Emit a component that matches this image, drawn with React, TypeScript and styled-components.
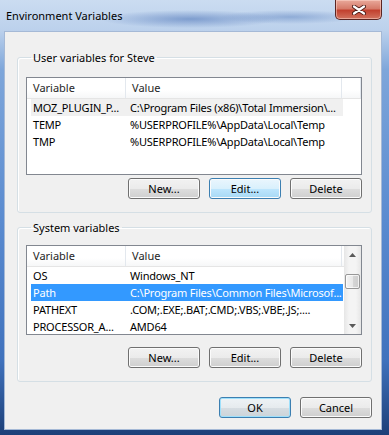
import React from "react";
import styled, { createGlobalStyle, css } from "styled-components";

const GlobalStyle = createGlobalStyle`
  html, body {
    margin: 0;
    padding: 0;
    background: #ffffff;
  }
  body {
    font-family: "Noto Sans", "Open Sans", sans-serif;
    font-size: 11px;
    color: #000000;
  }
`;

const Window = styled.div`
  width: 389px;
  height: 435px;
  box-sizing: border-box;
  display: flex;
  flex-direction: column;
  padding: 0 7px 5px 4px;
  background:
    radial-gradient(ellipse 90px 9px at 190px 19px, rgba(70, 110, 180, 0.55), transparent),
    radial-gradient(ellipse 70px 7px at 290px 17px, rgba(80, 120, 185, 0.45), transparent),
    linear-gradient(180deg, #cbdcf1 0px, #bcd1ec 30px, #7ea6da 70px, #5a8bd0 220px, #4072bd 360px, #1c3f78 435px);
`;

const TitleBar = styled.div`
  height: 31px;
  display: flex;
  justify-content: space-between;
  align-items: flex-start;
`;

const Title = styled.div`
  align-self: center;
  padding-left: 2px;
  font-size: 11px;
  line-height: 16px;
  color: #000000;
`;

const CloseButton = styled.div`
  width: 47px;
  height: 20px;
  box-sizing: border-box;
  display: flex;
  align-items: center;
  justify-content: center;
  border: 1px solid #5b2522;
  border-top: none;
  border-radius: 0 0 5px 5px;
  background: linear-gradient(180deg, #e9a99b 0%, #d67b6a 45%, #c2412f 55%, #d2735f 100%);
  box-shadow: inset 0 0 0 1px rgba(255, 220, 210, 0.5);
`;

const Client = styled.div`
  flex: 1;
  display: flex;
  flex-direction: column;
  background: #f0f0f0;
  border: 1px solid #a5b9d6;
  padding: 18px 9px 0 12px;
`;

const Group = styled.fieldset<{ $top: number }>`
  margin: ${(p) => p.$top}px 0 0 0;
  padding: 0 9px 13px 8px;
  border: 1px solid #d5dfe5;
  border-radius: 3px;
  box-shadow: inset 1px 1px 0 #ffffff;
  min-width: 0;
`;

const Legend = styled.legend`
  margin-left: 5px;
  padding: 0 2px;
  font-size: 11px;
  line-height: 15px;
`;

const ListView = styled.div<{ $top: number; $height: number }>`
  margin-top: ${(p) => p.$top}px;
  height: ${(p) => p.$height}px;
  box-sizing: border-box;
  border: 1px solid #828790;
  background: #ffffff;
  display: flex;
`;

const ListBody = styled.div`
  flex: 1;
  min-width: 0;
  display: flex;
  flex-direction: column;
  overflow: hidden;
`;

const Header = styled.div`
  height: 21px;
  flex: none;
  display: grid;
  grid-template-columns: 99px 216px 1fr;
  background: linear-gradient(180deg, #ffffff 0%, #ffffff 60%, #f6f7f8 100%);
  border-bottom: 1px solid #e5e5e5;
  box-sizing: border-box;
`;

const HeaderCell = styled.div`
  padding-left: 6px;
  line-height: 20px;
  color: #1e1e1e;
  border-right: 1px solid #e3e8ee;
  white-space: nowrap;
  overflow: hidden;
`;

const Row = styled.div<{ $state?: "selected" | "inactive" }>`
  margin-left: 4px;
  width: 312px;
  height: 17px;
  display: grid;
  grid-template-columns: 97px 1fr;
  line-height: 17px;
  white-space: nowrap;
  ${(p) =>
    p.$state === "selected" &&
    css`
      background: #3399ff;
      color: #ffffff;
    `}
  ${(p) =>
    p.$state === "inactive" &&
    css`
      background: #f0f0f0;
    `}
`;

const Cell = styled.div`
  padding-left: 2px;
  letter-spacing: -0.2px;
  overflow: hidden;
`;

const ScrollBar = styled.div`
  width: 17px;
  flex: none;
  display: flex;
  flex-direction: column;
  background: linear-gradient(90deg, #e6e6e6 0%, #f4f4f4 30%, #f4f4f4 70%, #e6e6e6 100%);
`;

const ScrollArrow = styled.div`
  height: 17px;
  flex: none;
  display: flex;
  align-items: center;
  justify-content: center;
`;

const ScrollTrack = styled.div`
  flex: 1;
  display: flex;
  flex-direction: column;
  align-items: center;
`;

const Thumb = styled.div<{ $offset: number }>`
  margin-top: ${(p) => p.$offset}px;
  width: 15px;
  height: 15px;
  box-sizing: border-box;
  border: 1px solid #979797;
  border-radius: 2px;
  background: linear-gradient(90deg, #f4f4f4 0%, #e8e8e8 50%, #d6d6d6 51%, #cdcdcd 100%);
  box-shadow: inset 0 0 0 1px rgba(255, 255, 255, 0.7);
`;

const ButtonRow = styled.div<{ $top: number }>`
  margin-top: ${(p) => p.$top}px;
  display: flex;
  justify-content: flex-end;
  gap: 9px;
`;

const Button = styled.div<{ $variant?: "hot" | "default" }>`
  width: 72px;
  height: 21px;
  box-sizing: border-box;
  display: flex;
  align-items: center;
  justify-content: center;
  font-size: 11px;
  border: 1px solid #707070;
  border-radius: 3px;
  background: linear-gradient(180deg, #f2f2f2 0%, #ebebeb 50%, #dddddd 51%, #cfcfcf 100%);
  box-shadow: inset 0 0 0 1px #fbfbfb;
  ${(p) =>
    p.$variant === "hot" &&
    css`
      border-color: #3c7fb1;
      background: linear-gradient(180deg, #eaf6fd 0%, #d9f0fc 50%, #bee6fd 51%, #a7d9f5 100%);
    `}
  ${(p) =>
    p.$variant === "default" &&
    css`
      border-color: #3c7fb1;
      background: linear-gradient(180deg, #eef3f6 0%, #e6ebee 50%, #d6dde2 51%, #ccd4d9 100%);
      box-shadow: inset 0 0 0 1px #9fe0fb;
    `}
`;

const DialogButtons = styled(ButtonRow)``;

type Item = { name: string; value: string; state?: "selected" | "inactive" };

const userVars: Item[] = [
  { name: "MOZ_PLUGIN_P...", value: "C:\\Program Files (x86)\\Total Immersion\\...", state: "inactive" },
  { name: "TEMP", value: "%USERPROFILE%\\AppData\\Local\\Temp" },
  { name: "TMP", value: "%USERPROFILE%\\AppData\\Local\\Temp" },
];

const systemVars: Item[] = [
  { name: "OS", value: "Windows_NT" },
  { name: "Path", value: "C:\\Program Files\\Common Files\\Microsof...", state: "selected" },
  { name: "PATHEXT", value: ".COM;.EXE;.BAT;.CMD;.VBS;.VBE;.JS;...." },
  { name: "PROCESSOR_A...", value: "AMD64" },
];

const Arrow = ({ up }: { up?: boolean }) => (
  <svg width="7" height="4" viewBox="0 0 7 4">
    <path d={up ? "M0 4 L3.5 0 L7 4 Z" : "M0 0 L3.5 4 L7 0 Z"} fill="#5a5a5a" />
  </svg>
);

const CloseGlyph = () => (
  <svg width="14" height="10" viewBox="0 0 14 10">
    <path d="M2 1.5 L12 8.5 M12 1.5 L2 8.5" stroke="#4a1a16" strokeWidth="4" strokeLinecap="round" />
    <path d="M2 1.5 L12 8.5 M12 1.5 L2 8.5" stroke="#ffffff" strokeWidth="2.2" strokeLinecap="round" />
  </svg>
);

const VarList = ({
  items,
  top,
  height,
  scroll,
}: {
  items: Item[];
  top: number;
  height: number;
  scroll?: boolean;
}) => (
  <ListView $top={top} $height={height}>
    <ListBody>
      <Header>
        <HeaderCell>Variable</HeaderCell>
        <HeaderCell>Value</HeaderCell>
        {!scroll && <HeaderCell />}
      </Header>
      {items.map((it) => (
        <Row key={it.name} $state={it.state}>
          <Cell>{it.name}</Cell>
          <Cell>{it.value}</Cell>
        </Row>
      ))}
    </ListBody>
    {scroll && (
      <ScrollBar>
        <ScrollArrow>
          <Arrow up />
        </ScrollArrow>
        <ScrollTrack>
          <Thumb $offset={11} />
        </ScrollTrack>
        <ScrollArrow>
          <Arrow />
        </ScrollArrow>
      </ScrollBar>
    )}
  </ListView>
);

const App = () => {
  return (
    <>
      <GlobalStyle />
      <Window>
        <TitleBar>
          <Title>Environment Variables</Title>
          <CloseButton>
            <CloseGlyph />
          </CloseButton>
        </TitleBar>
        <Client>
          <Group $top={0}>
            <Legend>User variables for Steve</Legend>
            <VarList items={userVars} top={12} height={98} />
            <ButtonRow $top={3}>
              <Button>New...</Button>
              <Button $variant="hot">Edit...</Button>
              <Button>Delete</Button>
            </ButtonRow>
          </Group>
          <Group $top={7}>
            <Legend>System variables</Legend>
            <VarList items={systemVars} top={10} height={90} scroll />
            <ButtonRow $top={12}>
              <Button>New...</Button>
              <Button>Edit...</Button>
              <Button>Delete</Button>
            </ButtonRow>
          </Group>
          <DialogButtons $top={15}>
            <Button $variant="default">OK</Button>
            <Button>Cancel</Button>
          </DialogButtons>
        </Client>
      </Window>
    </>
  );
};

export default App;
